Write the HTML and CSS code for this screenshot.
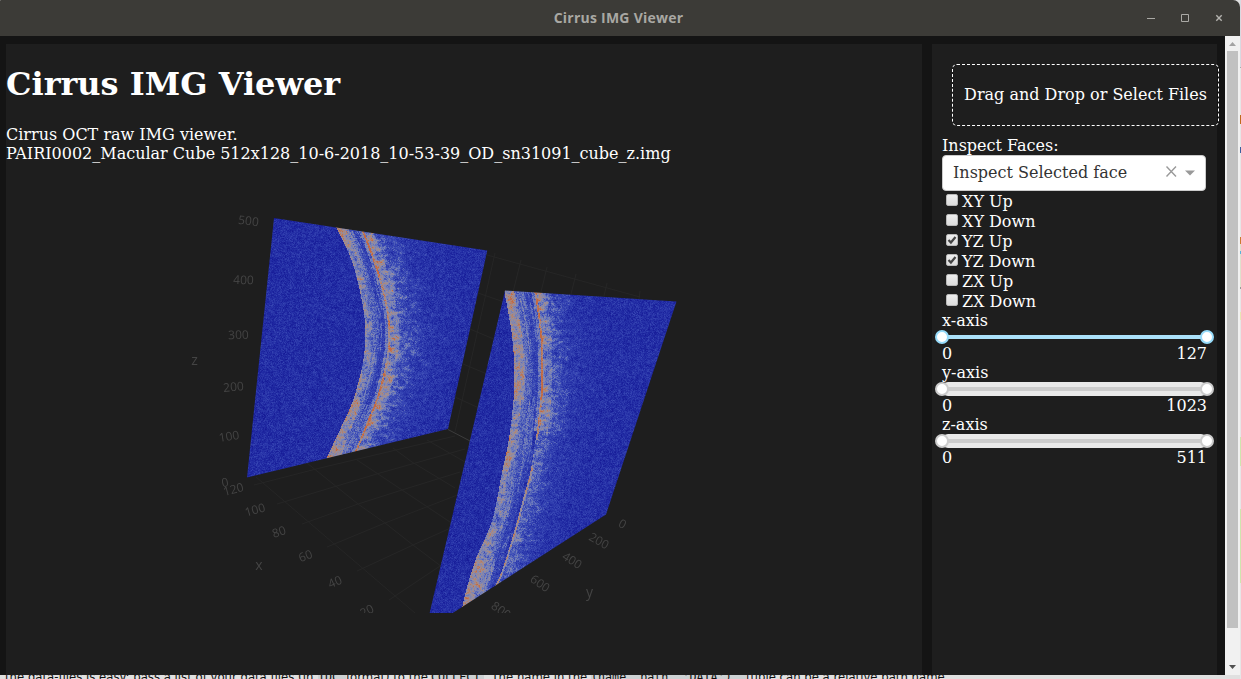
FILE: index.html
```html
<!DOCTYPE html>
<html lang="en">
<head>
<meta charset="utf-8">
<title>Cirrus IMG Viewer</title>
<link rel="stylesheet" href="styles.css">
</head>
<body>
<div class="desktop">
  <div class="window">
    <header class="titlebar">
      <span class="title">Cirrus IMG Viewer</span>
      <svg class="controls" width="80" height="16" viewBox="0 0 80 16">
        <path d="M2 9.500h8M36.500 5.500h7v7h-7z" fill="none" stroke="#aaa9a5"/>
        <path d="M71.300 6.300l5.400 5.400M76.700 6.300l-5.400 5.400" fill="none" stroke="#b4b3af" stroke-width="1.400"/>
      </svg>
    </header>
    <div class="view">
      <div class="page">
        <main class="panel main">
          <h1>Cirrus IMG Viewer</h1>
          <div>Cirrus OCT raw IMG viewer.</div>
          <div>PAIRI0002_Macular Cube 512x128_10-6-2018_10-53-39_OD_sn31091_cube_z.img</div>
          <div class="plot">
            <svg class="layer" width="910" height="450" viewBox="6 163 910 450">
              <g class="grid">
                <path d="M256 477L415 613M254 485L320 468L455 436M277 504L380 473L465 449M302 524L358 504L402 490L460 472M327 547L385 523L460 494M357 571L413 545L455 526M389 600L440 566"/>
                <path d="M307 463L358 504L385 523L413 545L442 567M357 460L402 490L450 522M393 448L412 462L455 488M427 440L465 462"/>
                <path d="M487 255L640 297M495 253L455 432M521 260L513 292M547 267L541 292M576 274L571 294M607 283L604 296M640 291L639 299M478 293L504 302M470 329L496 340M463 364L487 374M455 397L479 408"/>
              </g>
              <path d="M448 429.500L472 442" stroke="#3c3c3c" fill="none"/>
            </svg>
            <canvas class="layer" id="scan" width="910" height="450"></canvas>
            <svg class="layer axis" width="910" height="450" viewBox="6 163 910 450">
              <text transform="translate(248.500 221) rotate(7)" dy="4">500</text>
              <text transform="translate(243.500 280) rotate(2)" dy="4">400</text>
              <text transform="translate(238.500 335) rotate(-2)" dy="4">300</text>
              <text transform="translate(233.500 387) rotate(-5)" dy="4">200</text>
              <text transform="translate(229 436.500) rotate(-9)" dy="4">100</text>
              <text transform="translate(225 482.500) rotate(-12)" dy="4">0</text>
              <text transform="translate(233.500 489.500) rotate(-15)" dy="4">120</text>
              <text transform="translate(255 510) rotate(-16)" dy="4">100</text>
              <text transform="translate(279 532) rotate(-18)" dy="4">80</text>
              <text transform="translate(305.500 556) rotate(-21)" dy="4">60</text>
              <text transform="translate(335 582) rotate(-24)" dy="4">40</text>
              <text transform="translate(367 611) rotate(-27)" dy="4">20</text>
              <text transform="translate(622.500 524) rotate(28)" dy="4">0</text>
              <text transform="translate(599 541) rotate(29)" dy="4">200</text>
              <text transform="translate(572 560.500) rotate(32)" dy="4">400</text>
              <text transform="translate(540 583.500) rotate(34)" dy="4">600</text>
              <text transform="translate(501 610.500) rotate(35)" dy="4">800</text>
              <g class="names"><text x="194.500" y="364.500">z</text><text x="259" y="570">x</text><text x="589.500" y="597">y</text></g>
            </svg>
          </div>
        </main>
        <aside class="panel side">
          <div class="upload">Drag and Drop or Select Files</div>
          <div class="label">Inspect Faces:</div>
          <div class="select">
            <span class="value">Inspect Selected face</span>
            <svg width="32" height="14" viewBox="0 0 32 14"><path d="M1.500 1.500l9.500 10M11 1.500l-9.500 10" stroke="#999" stroke-width="1.400"/><path d="M20 5.500h10l-5 5z" fill="#999"/></svg>
          </div>
          <div class="option"><span class="box"></span>XY Up</div>
          <div class="option"><span class="box"></span>XY Down</div>
          <div class="option"><span class="box"><svg viewBox="0 0 12 12"><path d="M2.500 6l2.400 2.500L9.500 3"/></svg></span>YZ Up</div>
          <div class="option"><span class="box"><svg viewBox="0 0 12 12"><path d="M2.500 6l2.400 2.500L9.500 3"/></svg></span>YZ Down</div>
          <div class="option"><span class="box"></span>ZX Up</div>
          <div class="option"><span class="box"></span>ZX Down</div>
          <div class="label">x-axis</div>
          <div class="slider active"><i class="knob"></i><i class="rail"></i><i class="knob"></i></div>
          <div class="range"><span>0</span><span>127</span></div>
          <div class="label">y-axis</div>
          <div class="slider"><i class="knob"></i><i class="rail"></i><i class="knob"></i></div>
          <div class="range"><span>0</span><span>1023</span></div>
          <div class="label">z-axis</div>
          <div class="slider"><i class="knob"></i><i class="rail"></i><i class="knob"></i></div>
          <div class="range"><span>0</span><span>511</span></div>
        </aside>
      </div>
      <div class="scrollbar">
        <svg width="15" height="15"><path d="M4 10h7L7.500 6z" fill="#a3a3a3"/></svg>
        <div class="thumb"></div>
        <svg width="15" height="15"><path d="M4 5h7L7.500 9z" fill="#505050"/></svg>
      </div>
    </div>
  </div>
  <div class="edge"></div>
  <div class="behind"><span class="s1">the data-files is easy: pass a list of your data files (in</span><span class="s2 code">IDC</span><span class="s3">format) to the</span><span class="s4 code">COLLECT</span><span class="s5">. The name in the</span><span class="s6 code">(name, path, 'DATA')</span><span class="s7">tuple can be a relative path name.</span></div>
</div>
<script src="scan.js"></script>
</body>
</html>
```
FILE: styles.css
```css
* { box-sizing: border-box; }
body { margin: 0; background: #ececec; }
.desktop {
  position: relative;
  width: 1241px; height: 679px;
  overflow: hidden;
  background: #e0e0e0;
}
.window {
  width: 1240px; height: 675px;
  display: flex; flex-direction: column;
}
.titlebar {
  position: relative;
  height: 36px; flex: none;
  display: flex; align-items: center; justify-content: center;
  background: #3c3b37;
  border-radius: 1px 7px 0 0;
}
.title {
  margin: -2px 0 0 -3px;
  font: bold 14px "Open Sans", "Noto Sans", sans-serif;
  letter-spacing: 0.24px;
  color: #a9a8a3;
}
.controls { position: absolute; left: 1145px; top: 9px; }
.view { display: flex; flex: 1; min-height: 0; }
.page {
  width: 1225px;
  padding: 8px 8px 0 6px;
  display: flex; gap: 10px;
  background: #141414;
  color: #fff;
  font: 16px/19px "DejaVu Serif", serif;
}
.panel { background: #1e1e1e; }
.main { width: 916px; white-space: nowrap; }
h1 { margin: 22px 0; font-size: 32px; line-height: 37px; }
.plot { position: relative; height: 450px; }
.layer { position: absolute; left: 0; top: 0; }
.grid path { fill: none; stroke: #262626; }
.axis { font: 12px "Open Sans", sans-serif; fill: #444; text-anchor: middle; }
.names { font-size: 14px; }
.side { width: 285px; padding: 10px; }
.upload {
  width: 267px; height: 62px;
  margin: 10px 0 10px 10px;
  border: 1px dashed #fff; border-radius: 5px;
  line-height: 60px; text-align: center; white-space: nowrap;
}
.select {
  width: 264px; height: 36px;
  display: flex; align-items: center; justify-content: space-between;
  padding: 0 8px 2px 10px;
  background: #fff; color: #333;
  border: 1px solid #ccc; border-radius: 4px;
}
.option { height: 20px; display: flex; line-height: 21px; }
.box {
  width: 12px; height: 12px; margin: 3px 4px 0;
  background: linear-gradient(#eee, #dcdcdc);
  border: 1px solid #b9b9b9; border-radius: 2px;
}
.box svg { display: block; width: 12px; height: 12px; margin: -1px; }
.box path { fill: none; stroke: #444; stroke-width: 2.2; }
.select svg { flex: none; }
.slider {
  display: flex; align-items: center;
  width: 265px; height: 14px;
  background: #e9e9e9; border-radius: 6px;
}
.rail { flex: 1; height: 4px; background: #ccc; margin: 0 -1px; }
.knob {
  width: 14px; height: 14px; flex: none;
  border: 2px solid #ccc; border-radius: 50%; background: #fff;
  z-index: 1;
}
.knob:first-child { margin-left: -7px; }
.knob:last-child { margin-right: -7px; }
.active { background: none; }
.active .rail { background: #abe2fb; }
.active .knob { border-color: #96dbfa; }
.range { display: flex; justify-content: space-between; width: 265px; }
.scrollbar {
  width: 15px; display: flex; flex-direction: column; align-items: center;
  background: #f1f1f1;
}
.scrollbar svg { flex: none; }
.thumb { width: 11px; height: 577px; margin-bottom: auto; background: #c1c1c1; }
.edge {
  position: absolute; left: 1240px; top: 0; width: 1px; height: 679px;
  background: linear-gradient(#d9d9e0 0 67px, #aaa 67px 68px, #e6e6e6 68px 115px, #c06a1c 115px 124px, #e6e6e6 124px 147px, #3d5f9e 147px 153px, #e6e6e6 153px 237px, #cc7a30 237px 244px, #dfe0cc 244px 251px, #58b4dc 251px 254px, #dfe0cc 254px 287px, #999 287px 289px, #e6e6e6 289px 312px, #e8e6b4 312px 320px, #e6e6e6 320px 437px, #cfe5ae 437px 466px, #e6e6e6 466px 509px, #cfe5ae 509px 583px, #e6e6e6 583px);
}
.behind {
  display: flex; height: 4px; overflow: hidden;
  padding-left: 5px;
  color: #111; white-space: pre;
}
.behind span { flex: none; height: 16px; margin-top: -6px; font: 11.7px/16px "DejaVu Sans", sans-serif; }
.behind .code { font-family: "DejaVu Sans Mono", monospace; background: #cdd1d3; }
.s1 { width: 313px; }
.s2 { width: 28px; }
.s3 { width: 85px; }
.s4 { width: 53px; }
.s5 { width: 107px; }
.s6 { width: 155px; }
.s7 { width: 202px; }
```
FILE: scan.js
```js
// Draws the two visible faces of the OCT volume with speckle noise and retinal layers.
const canvas = document.getElementById('scan');
const ctx = canvas.getContext('2d');
const OX = 6, OY = 163;

let seed = 20181006;
function rnd() {
  seed = (Math.imul(seed, 1664525) + 1013904223) >>> 0;
  return seed / 4294967296;
}

const noise = Array.from({ length: 65536 }, rnd);
const cell = (x, y) => noise[(x & 255) + ((y & 255) << 8)];
function smooth(x, y) {
  const a = Math.floor(x), b = Math.floor(y), u = x - a, v = y - b;
  return (cell(a, b) * (1 - u) + cell(a + 1, b) * u) * (1 - v) +
    (cell(a, b + 1) * (1 - u) + cell(a + 1, b + 1) * u) * v;
}

function line(points, y) {
  let i = 0;
  while (i < points.length - 2 && y > points[i + 1][0]) i++;
  const [y0, x0] = points[i], [y1, x1] = points[i + 1];
  return x0 + (x1 - x0) * (y - y0) / (y1 - y0);
}
// Averages neighbouring rows so the layer boundaries bend gently.
function curve(points, y) {
  let sum = 0;
  for (let k = -12; k <= 12; k += 4) sum += line(points, y + k);
  return sum / 7;
}

const ramp = [[0, 18, 20, 146], [0.2, 32, 42, 163], [0.42, 58, 74, 182], [0.6, 112, 126, 188], [0.76, 150, 142, 160], [0.88, 176, 134, 116], [1, 194, 104, 66]];
function colour(v) {
  v = Math.max(0, Math.min(1, v));
  let i = 0;
  while (i < ramp.length - 2 && v > ramp[i + 1][0]) i++;
  const a = ramp[i], b = ramp[i + 1], t = (v - a[0]) / (b[0] - a[0]);
  return [1, 2, 3].map(k => a[k] + (b[k] - a[k]) * t);
}

const faces = [
  {
    shape: [[274, 218], [487.3, 250.5], [448, 429], [247, 477.5]],
    inner: [[228, 337], [260, 353], [297, 362], [323, 366], [343, 366], [367, 363], [403, 353], [430, 340], [458, 327]],
    outer: [[232, 363], [255, 372], [280, 380], [303, 386], [327, 389], [347, 389], [373, 384], [397, 378], [420, 368], [433, 363], [452, 355]],
    band: y => y > 400 ? 7 + (y - 400) * 0.1 : y < 270 ? 8 : 6,
    front: y => y > 370 ? 0.74 + (y - 370) * 0.0008 : y < 280 ? 0.73 : 0.66,
    middle: 0.43,
    back: y => y < 280 || y > 370 ? 0.96 : 0.84,
    behind: 0.56,
    reach: 25
  },
  {
    shape: [[505, 290.5], [676.5, 301.5], [606, 514.5], [452, 613.5], [429.5, 613.5]],
    inner: [[292, 505], [313, 509], [337, 513], [367, 515], [390, 515], [420, 512], [443, 509], [473, 502], [503, 497], [527, 491], [553, 478], [580, 469], [605, 463]],
    outer: [[292, 535], [317, 539], [347, 542], [387, 542], [427, 538], [453, 534], [473, 531], [500, 523], [527, 516], [550, 509], [573, 502], [583, 497]],
    band: y => y > 540 ? 10 + (y - 540) * 0.14 : y < 400 ? 9 : 7,
    front: y => y > 470 && y < 560 ? 0.66 : y > 400 && y < 440 ? 0.68 : 0.79,
    middle: 0.44,
    back: y => y < 400 ? 0.97 : y < 440 ? 0.86 : y < 465 ? 0.55 : 0.8,
    behind: 0.5,
    reach: 22
  }
];

for (const f of faces) {
  const layer = document.createElement('canvas');
  layer.width = canvas.width;
  layer.height = canvas.height;
  const c = layer.getContext('2d');
  const img = c.createImageData(910, 450);
  for (let py = 0; py < 450; py++) {
    const y = py + OY;
    const L = curve(f.inner, y), B = curve(f.outer, y);
    const weak = y > 430 && f === faces[1] ? 0.55 : 1;
    for (let px = 180; px < 680; px++) {
      const x = px + OX;
      const d = x - L, e = x - B;
      const coarse = smooth(x / 2.4, y / 2.4), streak = smooth(x / 7 + 40, y / 3 + 30);
      const patch = smooth(x / 6 + 90, y / 9 + 11);
      let v = 0.22;
      if (d > -1 && e < -4) {
        const w = f.band(y);
        v = d < w
          ? f.front(y) + (patch - 0.5) * 0.2 + (coarse - 0.5) * 0.25 - d * 0.008
          : f.middle + 0.12 * Math.max(0, 1 - (d - w) / 9);
        if (d > w && smooth(d / 1.5, y / 30) > 0.68) v += 0.12;
        if (d > w && e > -10) v -= 0.07;
      } else if (e >= -4 && e < -1) {
        v = 0.58 * weak + (coarse - 0.5) * 0.2;
      } else if (e >= -1 && e < 1) {
        v = f.back(y) + (coarse - 0.5) * 0.2;
      } else if (e >= 1) {
        const fall = Math.exp(-Math.pow((e - 1) / f.reach, 1.3));
        v = 0.23 + fall * (0.15 + f.behind * weak * streak * (0.4 + 0.8 * coarse));
        if (e < 10) v += 0.1 * weak;
      }
      v += (rnd() + rnd() - 1) * 0.16 + (coarse - 0.5) * 0.12;
      const rgb = colour(v), o = (py * 910 + px) * 4;
      img.data[o] = rgb[0];
      img.data[o + 1] = rgb[1];
      img.data[o + 2] = rgb[2];
      img.data[o + 3] = 255;
    }
  }
  c.putImageData(img, 0, 0);
  ctx.save();
  ctx.beginPath();
  f.shape.forEach(([x, y], i) => ctx[i ? 'lineTo' : 'moveTo'](x - OX, y - OY));
  ctx.closePath();
  ctx.clip();
  ctx.drawImage(layer, 0, 0);
  ctx.restore();
}
```
